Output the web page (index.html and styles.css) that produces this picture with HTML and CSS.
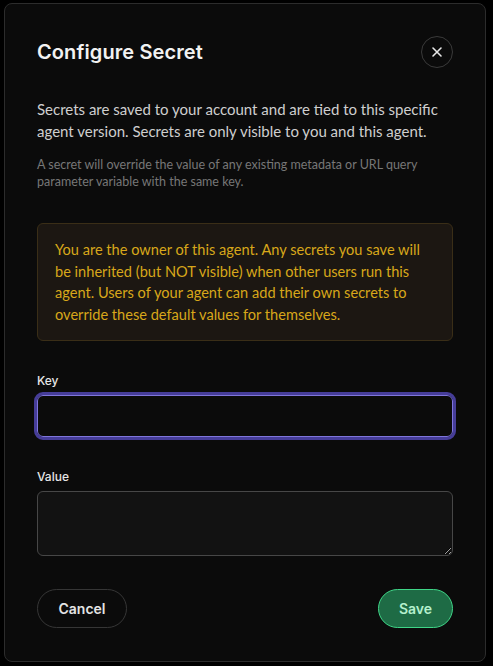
FILE: index.html
```html
<!DOCTYPE html>
<html>
<head>
<meta charset="utf-8">
<link rel="stylesheet" href="styles.css">
</head>
<body>
<div class="dialog">
  <div class="header">
    <h2 class="title">Configure Secret</h2>
    <button class="close" aria-label="Close">
      <svg width="12" height="12" viewBox="0 0 12 12"><path d="M2 2L10 10M10 2L2 10" stroke="#e8e8e8" stroke-width="1.6" stroke-linecap="round"/></svg>
    </button>
  </div>
  <p class="intro">Secrets are saved to your account and are tied to this specific agent version. Secrets are only visible to you and this agent.</p>
  <p class="note">A secret will override the value of any existing metadata or URL query parameter variable with the same key.</p>
  <div class="warning">You are the owner of this agent. Any secrets you save will be inherited (but NOT visible) when other users run this agent. Users of your agent can add their own secrets to override these default values for themselves.</div>
  <div class="field">
    <label class="label">Key</label>
    <input class="input focused" type="text">
  </div>
  <div class="field">
    <label class="label">Value</label>
    <textarea class="textarea"></textarea>
  </div>
  <div class="actions">
    <button class="btn cancel">Cancel</button>
    <button class="btn save">Save</button>
  </div>
</div>
</body>
</html>
```

FILE: styles.css
```css
* { box-sizing: border-box; }
html, body { margin: 0; background: #000; }
body {
  font-family: Lato, "Noto Sans", sans-serif;
  padding: 3px 7px 4px 4px;
  overflow: hidden;
}
.dialog {
  width: 482px;
  height: 659px;
  background: #0b0b0b;
  border: 1px solid #2c2c2c;
  border-radius: 8px;
  padding: 32px 32px 0 32px;
  display: flex;
  flex-direction: column;
}
.header {
  display: flex;
  align-items: center;
  justify-content: space-between;
}
.title {
  margin: 0;
  font-family: Inter, sans-serif;
  font-size: 20px;
  font-weight: 600;
  color: #f2f2f2;
  letter-spacing: 0.1px;
}
.close {
  width: 32px;
  height: 32px;
  border-radius: 50%;
  border: 1px solid #3a3a3a;
  background: transparent;
  display: flex;
  align-items: center;
  justify-content: center;
  padding: 0;
}
.intro {
  margin: 31px 0 0;
  font-size: 15px;
  line-height: 21.5px;
  color: #cfcfcf;
}
.note {
  margin: 14px 0 0;
  font-size: 12.5px;
  line-height: 17px;
  color: #777;
}
.warning {
  margin-top: 33px;
  background: #1c1712;
  border: 1px solid #3a2e17;
  border-radius: 6px;
  padding: 15px 17px;
  font-size: 14.6px;
  line-height: 21.5px;
  color: #d8a71a;
}
.field {
  margin-top: 31px;
  display: flex;
  flex-direction: column;
}
.label {
  font-family: Inter, sans-serif;
  font-size: 12px;
  line-height: 18px;
  font-weight: 500;
  color: #e6e6e6;
  margin-bottom: 5px;
}
.input {
  height: 42px;
  background: #0b0b0b;
  border: 1px solid #7f76dc;
  border-radius: 6px;
  outline: 3px solid #463d99;
  outline-offset: 0;
  color: #eee;
  font: inherit;
}
.textarea {
  height: 65px;
  background: #121212;
  border: 1px solid #474747;
  border-radius: 6px;
  color: #eee;
  font: inherit;
  resize: vertical;
}
.actions {
  margin-top: 33px;
  display: flex;
  justify-content: space-between;
}
.btn {
  height: 39px;
  border-radius: 20px;
  font-family: Inter, sans-serif;
  font-size: 14px;
  font-weight: 600;
  padding: 0;
}
.cancel {
  width: 90px;
  background: transparent;
  border: 1px solid #363636;
  color: #e4e4e4;
}
.save {
  width: 75px;
  background: #1e6b45;
  border: 1px solid #3fd587;
  color: #b4f0cd;
}
```
